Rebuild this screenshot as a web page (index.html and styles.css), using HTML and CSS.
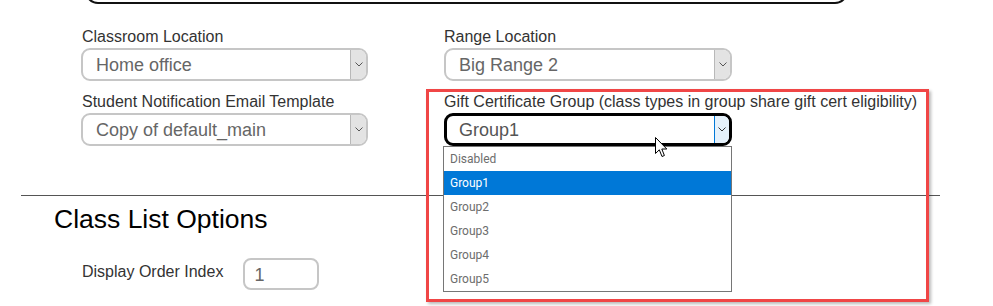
FILE: index.html
```html
<!DOCTYPE html>
<html>
<head>
<meta charset="utf-8">
<link rel="stylesheet" href="styles.css">
</head>
<body>
<div class="ta-clip"><div class="ta"></div></div>

<div class="grid">
  <div class="field">
    <div class="label">Classroom Location</div>
    <div class="select"><span class="val">Home office</span><span class="arrow"><svg width="8" height="5" viewBox="0 0 8 5"><path d="M0.5 0.5 L4 4 L7.5 0.5" fill="none" stroke="#555" stroke-width="1"/></svg></span></div>
  </div>
  <div class="field right">
    <div class="label">Range Location</div>
    <div class="select"><span class="val">Big Range 2</span><span class="arrow"><svg width="8" height="5" viewBox="0 0 8 5"><path d="M0.5 0.5 L4 4 L7.5 0.5" fill="none" stroke="#555" stroke-width="1"/></svg></span></div>
  </div>
  <div class="field">
    <div class="label">Student Notification Email Template</div>
    <div class="select"><span class="val">Copy of default_main</span><span class="arrow"><svg width="8" height="5" viewBox="0 0 8 5"><path d="M0.5 0.5 L4 4 L7.5 0.5" fill="none" stroke="#555" stroke-width="1"/></svg></span></div>
  </div>
  <div class="field right">
    <div class="label nowrap">Gift Certificate Group (class types in group share gift cert eligibility)</div>
    <div class="select focus"><span class="val">Group1</span><span class="arrow"><svg width="8" height="5" viewBox="0 0 8 5"><path d="M0.5 0.5 L4 4 L7.5 0.5" fill="none" stroke="#333" stroke-width="1"/></svg></span></div>
  </div>
</div>

<div class="rule"></div>

<h2 class="heading">Class List Options</h2>

<div class="row">
  <div class="label">Display Order Index</div>
  <div class="input">1</div>
</div>

<ul class="dropdown">
  <li>Disabled</li>
  <li class="sel">Group1</li>
  <li>Group2</li>
  <li>Group3</li>
  <li>Group4</li>
  <li>Group5</li>
</ul>

<div class="highlight"></div>

<svg class="cursor" width="13" height="21" viewBox="0 0 13 21"><path d="M0.5 0.5 L0.5 16.5 L4.3 12.8 L7 19.5 L9.4 18.5 L6.8 12 L11.8 12 Z" fill="#fff" stroke="#000" stroke-width="1" stroke-linejoin="miter"/></svg>
</body>
</html>
```

FILE: styles.css
```css
* { box-sizing: border-box; }
html, body { margin: 0; padding: 0; background: #fff; }
body {
  font-family: "Liberation Sans", Arial, sans-serif;
  color: #333;
  width: 993px;
  height: 306px;
  overflow: hidden;
  position: relative;
}
.ta-clip {
  height: 4px;
  overflow: hidden;
  display: flex;
  align-items: flex-end;
  margin-left: 85px;
  width: 763px;
}
.ta {
  flex-shrink: 0;
  width: 100%;
  height: 40px;
  border: 2px solid #111;
  border-radius: 13px;
}
.grid {
  display: grid;
  grid-template-columns: 287px 288px;
  column-gap: 76px;
  row-gap: 12px;
  margin: 24px 0 0 81px;
}
.label {
  font-size: 16px;
  line-height: 18px;
  color: #333;
  margin-bottom: 2px;
  padding-left: 1px;
}
.right .label { padding-left: 0; }
.nowrap { white-space: nowrap; }
.select {
  height: 33px;
  border: 2px solid #c6c6c6;
  border-radius: 9px;
  display: flex;
  align-items: center;
  justify-content: space-between;
  background: #fff;
  overflow: hidden;
}
.select .val {
  font-size: 18px;
  color: #666;
  padding-left: 13px;
  padding-top: 2px;
}
.arrow {
  width: 16px;
  height: 100%;
  background: #e3e3e3;
  border-left: 1px solid #b8b8b8;
  display: flex;
  align-items: center;
  justify-content: center;
}
.select.focus {
  border: 3px solid #000;
}
.select.focus .val { padding-left: 12px; color: #555; }
.select.focus .arrow {
  background: #e5f1fb;
  border: 1px solid #0078d7;
  border-right: none;
  width: 15px;
  height: 29px;
}
.rule {
  margin: 49px 0 0 21px;
  width: 919px;
  border-top: 1px solid #555;
}
.heading {
  margin: 8px 0 0 54px;
  font-size: 26.5px;
  line-height: 30px;
  font-weight: normal;
  color: #000;
}
.row {
  display: flex;
  align-items: center;
  margin: 24px 0 0 81px;
  gap: 20px;
}
.row .label { margin-bottom: 4px; }
.input {
  width: 76px;
  height: 32px;
  border: 2px solid #c6c6c6;
  border-radius: 8px;
  font-size: 18px;
  color: #666;
  padding-left: 9px;
  line-height: 30px;
}
.dropdown {
  position: absolute;
  left: 443px;
  top: 146px;
  width: 289px;
  margin: 0;
  padding: 0;
  list-style: none;
  border: 1px solid #767676;
  background: #fff;
}
.dropdown li {
  height: 24px;
  line-height: 24px;
  font-family: Roboto, "Noto Sans", sans-serif;
  font-size: 12px;
  color: #6d6d6d;
  padding-left: 6px;
}
.dropdown li.sel {
  background: #0078d7;
  color: #fff;
}
.highlight {
  position: absolute;
  left: 426px;
  top: 89px;
  width: 503px;
  height: 213px;
  border: 3px solid #f04646;
  box-shadow: 2px 2px 3px rgba(0,0,0,0.28);
}
.cursor {
  position: absolute;
  left: 655px;
  top: 137px;
}
```
